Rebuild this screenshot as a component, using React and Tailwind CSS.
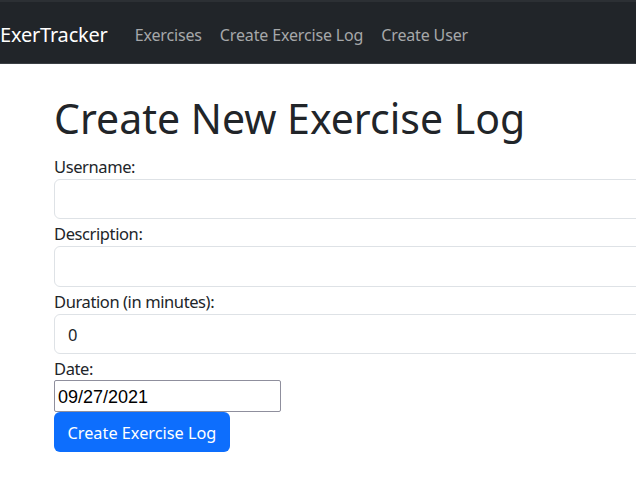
export default function App() {
  const font = { fontFamily: '"Noto Sans", "Open Sans", sans-serif' };
  const label = "text-[16.5px] tracking-[-0.4px] leading-[24px] pt-[3px] block";
  return (
    <div className="w-[636px] h-[500px] overflow-hidden bg-white text-[#212529]" style={font}>
      <nav className="h-[64px] bg-[#212529] border-t-[2px] border-t-[#2c3034] border-b border-b-[#3a3f44] flex items-center pt-[5px]">
        <span className="text-white text-[20px] tracking-[-0.2px] leading-none mr-[18px]">ExerTracker</span>
        <div className="flex text-[16px] tracking-[-0.15px] text-[#a6a8aa] leading-none">
          <span className="px-[9px]">Exercises</span>
          <span className="px-[9px]">Create Exercise Log</span>
          <span className="px-[9px]">Create User</span>
        </div>
      </nav>
      <div className="pl-[54px] pt-[30px]">
        <h1 className="text-[41px] leading-[49px] font-normal mb-[8.5px]">Create New Exercise Log</h1>
        <form className="flex flex-col">
          <label className={label}>Username:</label>
          <div className="w-[640px] h-[40.5px] border border-[#dee2e6] rounded-[6px]"></div>
          <label className={label}>Description:</label>
          <div className="w-[640px] h-[40.5px] border border-[#dee2e6] rounded-[6px]"></div>
          <label className={label}>Duration (in minutes):</label>
          <div className="w-[640px] h-[40.5px] border border-[#dee2e6] rounded-[6px] flex items-center pl-[13px] pt-[3px] text-[16.5px]">0</div>
          <label className="text-[16.5px] tracking-[-0.4px] leading-[23px] pt-[3px] block">Date:</label>
          <div
            className="w-[227px] h-[32px] border border-[#8f8f9d] rounded-[2px] flex items-center pl-[3px] pt-[3px] text-[18px] text-black"
            style={{ fontFamily: '"Liberation Sans", Arial, sans-serif' }}
          >
            09/27/2021
          </div>
          <div>
            <button type="button" className="h-[40px] px-[13.5px] pt-[3px] bg-[#0d6efd] text-white text-[16.3px] rounded-[6px] leading-none">
              Create Exercise Log
            </button>
          </div>
        </form>
      </div>
    </div>
  );
}
